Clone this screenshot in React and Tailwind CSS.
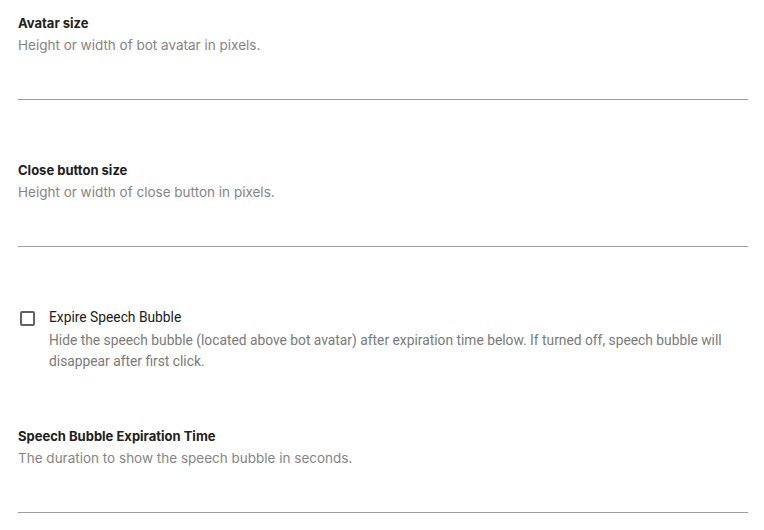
import React from 'react';

function NumberField({ title, hint }) {
    return (
        <div>
            <div className="text-[13px] leading-[20px] font-bold text-[#212121]" style={{ fontFamily: 'Inter, "Liberation Sans", sans-serif' }}>{title}</div>
            <div className="mt-[2px] text-[13.5px] leading-[20px] text-[#858585]" style={{ fontFamily: 'Inter, "Liberation Sans", sans-serif' }}>{hint}</div>
            <input
                type="number"
                className="block w-full h-[45px] border-b border-[#9e9e9e] bg-transparent outline-none text-[13px]"
            />
        </div>
    );
}

export default function App() {
    return (
        <div className="w-[764px] h-[530px] bg-white pl-[18px] pr-[16px] pt-[13px] overflow-hidden" style={{ fontFamily: 'Roboto, "Liberation Sans", sans-serif' }}>
            <NumberField title="Avatar size" hint="Height or width of bot avatar in pixels." />
            <div className="mt-[60px]">
                <NumberField title="Close button size" hint="Height or width of close button in pixels." />
            </div>

            {/* Expire toggle */}
            <div className="mt-[60px] flex items-start gap-[14px] pl-[2px]">
                <span className="mt-[4px] w-[15px] h-[15px] shrink-0 rounded-[2px] border-2 border-[#616161] bg-white"></span>
                <div>
                    <div className="text-[13.8px] leading-[20px] text-[#212121]">Expire Speech Bubble</div>
                    <p className="mt-[3px] text-[13.8px] leading-[21px] text-[#7a7a7a] max-w-[690px]">
                        Hide the speech bubble (located above bot avatar) after expiration time below. If turned off, speech bubble will disappear after first click.
                    </p>
                </div>
            </div>

            <div className="mt-[54px]">
                <NumberField title="Speech Bubble Expiration Time" hint="The duration to show the speech bubble in seconds." />
            </div>
        </div>
    );
}
